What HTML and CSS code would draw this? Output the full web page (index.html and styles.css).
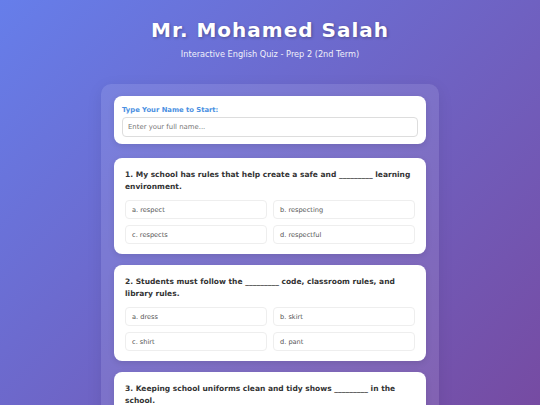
FILE: index.html
```html
<!DOCTYPE html>
<html lang="en">
<head>
<meta charset="utf-8">
<title>Mr. Mohamed Salah - Interactive English Quiz</title>
<link rel="stylesheet" href="styles.css">
</head>
<body>
  <header class="header">
    <h1 class="title">Mr. Mohamed Salah</h1>
    <p class="subtitle">Interactive English Quiz - Prep 2 (2nd Term)</p>
  </header>

  <main class="container">
    <section class="card name-card">
      <label class="name-label" for="student-name">Type Your Name to Start:</label>
      <input class="name-input" id="student-name" type="text" placeholder="Enter your full name...">
    </section>

    <section class="card question">
      <p class="question-text">1. My school has rules that help create a safe and _________ learning environment.</p>
      <div class="options">
        <div class="option">a. respect</div>
        <div class="option">b. respecting</div>
        <div class="option">c. respects</div>
        <div class="option">d. respectful</div>
      </div>
    </section>

    <section class="card question">
      <p class="question-text">2. Students must follow the _________ code, classroom rules, and library rules.</p>
      <div class="options">
        <div class="option">a. dress</div>
        <div class="option">b. skirt</div>
        <div class="option">c. shirt</div>
        <div class="option">d. pant</div>
      </div>
    </section>

    <section class="card question">
      <p class="question-text">3. Keeping school uniforms clean and tidy shows _________ in the school.</p>
      <div class="options">
        <div class="option">a. respect</div>
        <div class="option">b. respectful</div>
        <div class="option">c. respected</div>
        <div class="option">d. respecting</div>
      </div>
    </section>
  </main>
</body>
</html>
```

FILE: styles.css
```css
html {
  min-height: 100%;
}

body {
  margin: 0;
  padding: 18px 0 20px;
  font-family: "DejaVu Sans", Verdana, sans-serif;
  background: linear-gradient(135deg, #667eea 0%, #764ba2 100%);
  background-attachment: fixed;
  min-height: 100vh;
  box-sizing: border-box;
}

.header {
  text-align: center;
  color: #fff;
  margin-bottom: 25px;
}

.title {
  margin: 0;
  font-size: 20px;
  line-height: 24px;
  font-weight: bold;
  letter-spacing: 1px;
  text-shadow: 1px 1px 3px rgba(0, 0, 0, 0.3);
}

.subtitle {
  margin: 7px 0 0;
  font-size: 8.2px;
  line-height: 10px;
  opacity: 0.9;
}

.container {
  width: 338px;
  margin: 0 auto;
  box-sizing: border-box;
  padding: 12px 13px;
  background: rgba(255, 255, 255, 0.1);
  border-radius: 10px;
  box-shadow: 0 4px 16px rgba(0, 0, 0, 0.08);
}

.card {
  background: #fff;
  border-radius: 8px;
  box-shadow: 0 2px 6px rgba(0, 0, 0, 0.1);
}

.name-card {
  padding: 9px 8px 7px;
  margin-bottom: 14px;
}

.name-label {
  display: block;
  font-size: 6.8px;
  line-height: 10px;
  font-weight: bold;
  color: #4a90e2;
  margin-bottom: 2px;
}

.name-input {
  display: block;
  width: 100%;
  box-sizing: border-box;
  height: 20px;
  padding: 0 5px;
  border: 1px solid #ddd;
  border-radius: 4px;
  font-family: "DejaVu Sans", Verdana, sans-serif;
  font-size: 6.9px;
  color: #333;
  outline: none;
}

.name-input::placeholder {
  color: #777;
}

.question {
  padding: 11px 11px 10px;
  margin-bottom: 11px;
}

.question-text {
  margin: 0 0 7px;
  font-size: 7.5px;
  line-height: 12px;
  font-weight: bold;
  color: #333;
}

.options {
  display: grid;
  grid-template-columns: 1fr 1fr;
  gap: 6px;
}

.option {
  height: 19px;
  box-sizing: border-box;
  display: flex;
  align-items: center;
  padding: 0 6px;
  border: 1px solid #eee;
  border-radius: 4px;
  font-size: 6.6px;
  color: #555;
}
```
